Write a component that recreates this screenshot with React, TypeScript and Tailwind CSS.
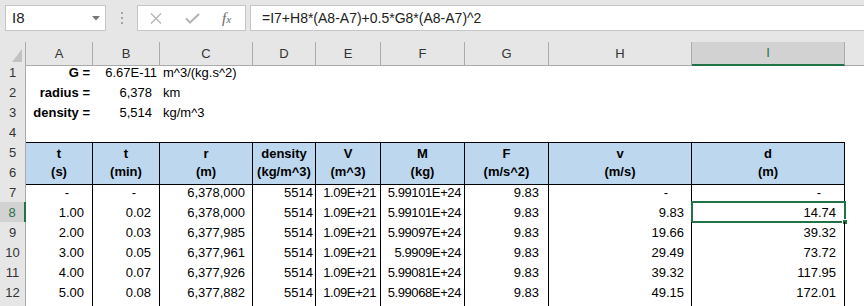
import React from "react";

const GRID = "grid grid-cols-[26px_67px_67px_93px_63px_65px_84px_84px_143px_153px_19px] h-5";
const LETTERS = ["A", "B", "C", "D", "E", "F", "G", "H", "I"];

// right padding per column for numbers (accounting style leaves a gap)
const PAD = ["pr-2", "pr-2", "pr-[7px]", "pr-[2px]", "pr-1 tracking-[-0.4px]", "pr-[3px] tracking-[-0.4px]", "pr-[9px]", "pr-[7px]", "pr-2"];

const HEAD1 = ["t", "t", "r", "density", "V", "M", "F", "v", "d"];
const HEAD2 = ["(s)", "(min)", "(m)", "(kg/m^3)", "(m^3)", "(kg)", "(m/s^2)", "(m/s)", "(m)"];

const DATA = [
  ["-", "-", "6,378,000", "5514", "1.09E+21", "5.99101E+24", "9.83", "-", "-"],
  ["1.00", "0.02", "6,378,000", "5514", "1.09E+21", "5.99101E+24", "9.83", "9.83", "14.74"],
  ["2.00", "0.03", "6,377,985", "5514", "1.09E+21", "5.99097E+24", "9.83", "19.66", "39.32"],
  ["3.00", "0.05", "6,377,961", "5514", "1.09E+21", "5.9909E+24", "9.83", "29.49", "73.72"],
  ["4.00", "0.07", "6,377,926", "5514", "1.09E+21", "5.99081E+24", "9.83", "39.32", "117.95"],
  ["5.00", "0.08", "6,377,882", "5514", "1.09E+21", "5.99068E+24", "9.83", "49.15", "172.01"],
];

function RowHead({ n, active }: { n?: number; active?: boolean }) {
  return (
    <div
      className={
        active
          ? "flex items-center justify-center bg-[#d2d2d2] border-b border-[#c6c6c6] border-r-2 border-r-[#217346] text-[13px] text-[#217346] leading-[22px]"
          : "flex items-center justify-center bg-[#e6e6e6] border-b border-[#d4d4d4] border-r border-r-[#ababab] text-[13px] text-[#333] leading-[22px]"
      }
    >
      {n}
    </div>
  );
}

function FormulaBar() {
  return (
    <div className="h-[42px] bg-[#e6e6e6] flex items-start pt-[5px] pl-[5px]">
      <div className="w-[101px] h-[26px] bg-white border border-[#c6c6c6] flex items-center justify-between pl-[6px] pr-[5px] text-[15px] text-[#222]">
        <span>I8</span>
        <svg width="8" height="5" viewBox="0 0 8 5">
          <path d="M0 0 L8 0 L4 4.5 Z" fill="#777" />
        </svg>
      </div>
      <div className="w-[31px] h-[26px] flex flex-col items-center justify-center gap-[3px]">
        <span className="w-[2px] h-[2px] bg-[#a6a6a6]" />
        <span className="w-[2px] h-[2px] bg-[#a6a6a6]" />
        <span className="w-[2px] h-[2px] bg-[#a6a6a6]" />
      </div>
      <div className="w-[109px] h-[26px] bg-white border border-[#c6c6c6] flex items-center pl-[12px]">
        <svg width="12" height="11" viewBox="0 0 12 11">
          <path d="M1 0.5 L11 10.5 M11 0.5 L1 10.5" stroke="#b4b4b4" strokeWidth="1.3" />
        </svg>
        <svg className="ml-[23px]" width="15" height="11" viewBox="0 0 15 11">
          <path d="M1 5.5 L5 9.5 L14 1" stroke="#b4b4b4" strokeWidth="2" fill="none" />
        </svg>
        <span className="ml-[22px] font-['Liberation_Serif',serif] italic text-[15px] text-[#666] leading-none">
          f<span className="text-[11px]">x</span>
        </span>
      </div>
      <div className="ml-[4px] flex-1 h-[26px] bg-white border border-r-0 border-[#c6c6c6] flex items-center pl-[11px] text-[14px] text-[#222]">
        =I7+H8*(A8-A7)+0.5*G8*(A8-A7)^2
      </div>
    </div>
  );
}

function ColumnHeader() {
  return (
    <div className={GRID}>
      <div className="bg-[#e6e6e6] border-r border-b border-[#ababab] flex items-end justify-end pr-[3px] pb-[3px]">
        <svg width="10" height="13" viewBox="0 0 10 13">
          <path d="M10 0 L10 13 L0 13 Z" fill="#c2c2c2" />
        </svg>
      </div>
      {LETTERS.map((l) =>
        l === "I" ? (
          <div
            key={l}
            className="bg-[#d2d2d2] border-r border-[#ababab] border-b-2 border-b-[#217346] flex items-center justify-center text-[13px] text-[#217346] leading-[22px]"
          >
            {l}
          </div>
        ) : (
          <div
            key={l}
            className="bg-[#e6e6e6] border-r border-b border-[#ababab] flex items-center justify-center text-[13px] text-[#333] leading-[22px]"
          >
            {l}
          </div>
        )
      )}
      <div className="bg-[#e6e6e6] border-b border-[#ababab]" />
    </div>
  );
}

export default function App() {
  return (
    <div className="w-[864px] h-[306px] overflow-hidden bg-white font-['Liberation_Sans',Arial,sans-serif] text-black">
      <FormulaBar />
      <ColumnHeader />

      {/* rows 1-3: constants */}
      {[
        ["G =", "6.67E-11", "pr-[3px]", "m^3/(kg.s^2)"],
        ["radius =", "6,378", "pr-2", "km"],
        ["density =", "5,514", "pr-2", "kg/m^3"],
      ].map(([label, val, pad, unit], i) => (
        <div key={label} className={GRID}>
          <RowHead n={i + 1} />
          <div className="text-right pr-[3px] font-bold text-[13px] leading-[22px] whitespace-nowrap">{label}</div>
          <div className={`text-right ${pad} text-[13px] leading-[22px] whitespace-nowrap`}>{val}</div>
          <div className="pl-[3px] text-[13px] leading-[22px] whitespace-nowrap overflow-visible">{unit}</div>
          <div className="col-span-7" />
        </div>
      ))}

      <div className={GRID}>
        <RowHead n={4} />
        <div className="col-span-10" />
      </div>

      {/* table header rows 5-6 */}
      <div className={GRID}>
        <RowHead n={5} />
        {HEAD1.map((h, i) => (
          <div key={i} className="bg-[#bdd7ee] border-t border-r border-black text-center font-bold text-[13px] leading-[22px]">
            {h}
          </div>
        ))}
        <div />
      </div>
      <div className={GRID}>
        <RowHead n={6} />
        {HEAD2.map((h, i) => (
          <div key={i} className="bg-[#bdd7ee] border-b border-r border-black text-center font-bold text-[13px] leading-[20px]">
            {h}
          </div>
        ))}
        <div />
      </div>

      {/* data rows 7-12 */}
      {DATA.map((row, r) => (
        <div key={r} className={GRID}>
          <RowHead n={r + 7} active={r === 1} />
          {row.map((v, c) => (
            <div
              key={c}
              className={`relative border-r border-black text-right text-[13px] leading-[22px] whitespace-nowrap ${
                v === "-" ? "pr-[23px]" : PAD[c]
              }`}
            >
              {v}
              {r === 1 && c === 8 && (
                <div className="absolute left-[-1px] top-[-1px] w-[155px] h-[22px] border-2 border-[#217346]">
                  <div className="absolute right-[-4px] bottom-[-4px] w-[6px] h-[6px] bg-[#217346] border border-white" />
                </div>
              )}
            </div>
          ))}
          <div />
        </div>
      ))}

      {/* row 13, only its top edge is in view */}
      <div className={GRID}>
        <RowHead />
        {LETTERS.map((l) => (
          <div key={l} className="border-r border-black" />
        ))}
        <div />
      </div>
    </div>
  );
}
